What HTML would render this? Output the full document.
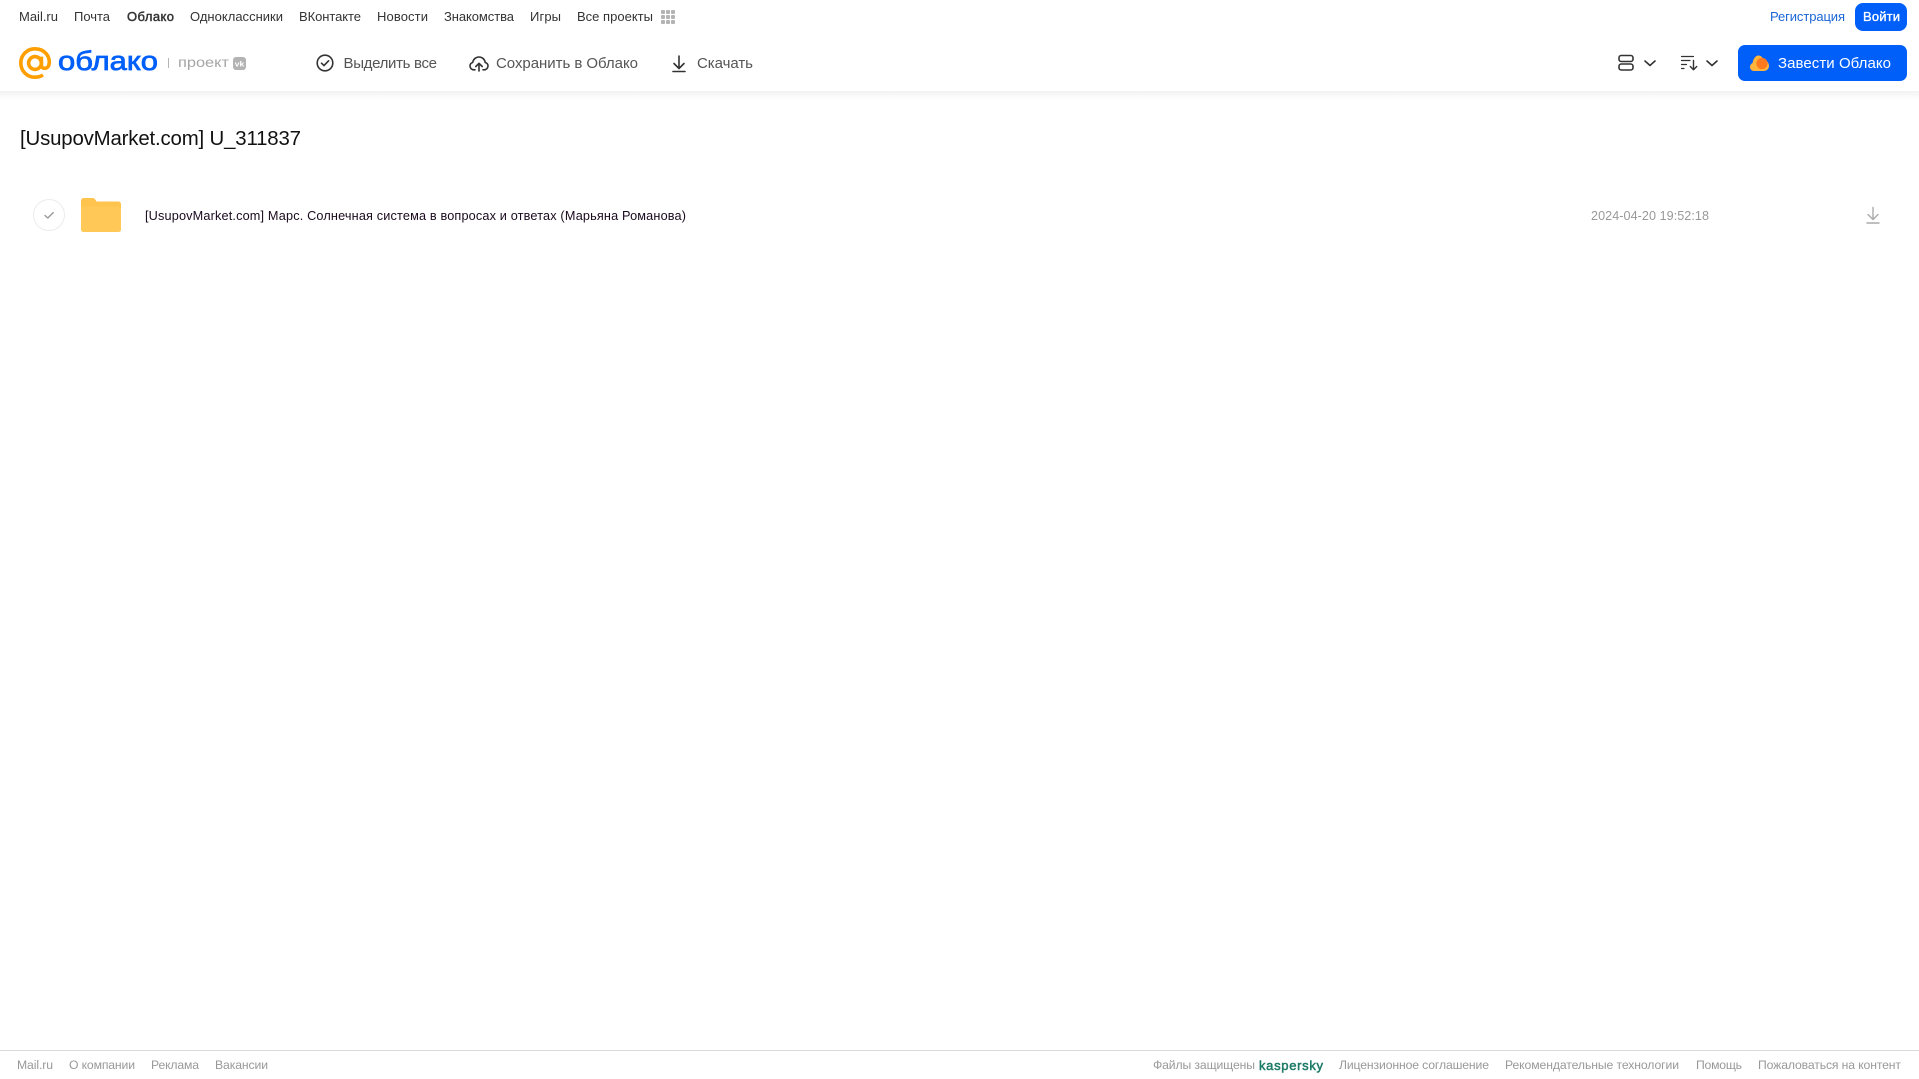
<!DOCTYPE html>
<html lang="ru">
<head>
<meta charset="utf-8">
<title>Облако</title>
<style>
html,body{margin:0;padding:0;background:#fff;width:1919px;height:1079px;overflow:hidden}
svg{display:block;position:absolute;left:0;top:0}
text{font-family:"Liberation Sans",Arial,sans-serif}
.n{font-size:13px;fill:#333}
.a{font-size:15px;fill:#555}
.f{font-size:12.2px;fill:#999}
</style>
</head>
<body>
<svg width="1919" height="1079" viewBox="0 0 1919 1079" xmlns="http://www.w3.org/2000/svg">
<defs>
<linearGradient id="sh" x1="0" y1="0" x2="0" y2="1">
<stop offset="0" stop-color="#f2f2f2"/><stop offset="1" stop-color="#ffffff"/>
</linearGradient>
</defs>
<rect width="1919" height="1079" fill="#fff"/>
<rect x="0" y="91" width="1919" height="9" fill="url(#sh)"/>

<!-- top nav -->
<text class="n" x="19" y="21" textLength="39" lengthAdjust="spacing">Mail.ru</text>
<text class="n" x="74" y="21" textLength="36" lengthAdjust="spacing">Почта</text>
<text class="n" x="127" y="21" textLength="47" lengthAdjust="spacing" stroke="#333" stroke-width=".45">Облако</text>
<text class="n" x="190" y="21" textLength="93" lengthAdjust="spacing">Одноклассники</text>
<text class="n" x="299" y="21" textLength="62" lengthAdjust="spacing">ВКонтакте</text>
<text class="n" x="377" y="21" textLength="51" lengthAdjust="spacing">Новости</text>
<text class="n" x="444" y="21" textLength="70" lengthAdjust="spacing">Знакомства</text>
<text class="n" x="530" y="21" textLength="31" lengthAdjust="spacing">Игры</text>
<text class="n" x="577" y="21" textLength="76" lengthAdjust="spacing">Все проекты</text>
<g fill="#b4b4b4">
<rect x="661" y="10" width="4" height="4" rx="1"/><rect x="666" y="10" width="4" height="4" rx="1"/><rect x="671" y="10" width="4" height="4" rx="1"/>
<rect x="661" y="15" width="4" height="4" rx="1"/><rect x="666" y="15" width="4" height="4" rx="1"/><rect x="671" y="15" width="4" height="4" rx="1"/>
<rect x="661" y="20" width="4" height="4" rx="1"/><rect x="666" y="20" width="4" height="4" rx="1"/><rect x="671" y="20" width="4" height="4" rx="1"/>
</g>

<!-- logo -->
<g fill="none" stroke="#ff9e00" stroke-width="3.6">
<circle cx="35" cy="63" r="6.4"/>
<path d="M41.4 56.6V65.5C41.4 69 47.6 69.5 48.9 65C50.8 57 45 48.8 35 48.8C26.8 48.8 20.8 55.2 20.8 63C20.8 71 27 77.2 35 77.2C38 77.2 40.6 76.5 43 75"/>
</g>
<text x="58" y="70" font-size="27" fill="#005ff9" stroke="#005ff9" stroke-width=".75" textLength="100" lengthAdjust="spacingAndGlyphs">облако</text>
<rect x="168" y="58" width="1" height="10" fill="#b5b5b5"/>
<text x="178" y="67" font-size="14" fill="#a6a6a6" textLength="51" lengthAdjust="spacingAndGlyphs">проект</text>
<rect x="233" y="57" width="13" height="13" rx="3" fill="#b3b3b3"/>
<text x="234.8" y="66.5" font-size="7.5" font-weight="700" fill="#fff" textLength="9.5" lengthAdjust="spacingAndGlyphs">vk</text>

<!-- actions -->
<g fill="none" stroke="#333" stroke-width="1.6" stroke-linecap="round" stroke-linejoin="round">
<circle cx="325" cy="63" r="7.8"/>
<path d="M321.5 63.2L324 65.6L328.6 60.8"/>
<path d="M475 69.8H474C471.6 69.8 470 68 470 66C470 64.3 471.1 62.9 472.7 62.5C473.2 59.5 475.6 57 479 57C482.4 57 484.8 59.5 485.2 62.5C486.9 62.9 488 64.3 488 66C488 68 486.4 69.8 484 69.8H483"/>
<path d="M479 71V63.5M475.8 66.5L479 63.3L482.2 66.5"/>
<path d="M679 56V68M674 63.5L679 68.5L684 63.5"/>
<path d="M673 71.5H685"/>
</g>
<text class="a" x="343.5" y="68" textLength="93.5" lengthAdjust="spacing">Выделить все</text>
<text class="a" x="496" y="68" textLength="142" lengthAdjust="spacing">Сохранить в Облако</text>
<text class="a" x="697" y="68" textLength="56" lengthAdjust="spacing">Скачать</text>

<!-- top right -->
<text class="n" x="1770" y="21" style="fill:#1a66d6" textLength="75" lengthAdjust="spacing">Регистрация</text>
<rect x="1855" y="3" width="52" height="28" rx="8" fill="#005ff9"/>
<text x="1863" y="21" font-size="13" fill="#fff" stroke="#fff" stroke-width=".35" textLength="37" lengthAdjust="spacing">Войти</text>

<g fill="none" stroke="#333" stroke-width="1.6" stroke-linecap="round" stroke-linejoin="round">
<rect x="1619" y="55.5" width="14" height="6" rx="2.2"/>
<rect x="1619" y="64" width="14" height="6" rx="2.2"/>
<path d="M1645 61L1650 65.5L1655 61"/>
<path d="M1707 61L1712 65.5L1717 61"/>
<path d="M1681.5 56.5H1693.5M1681.5 60.5H1690M1681.5 64.5H1686.5M1681.5 68.5H1684" stroke-width="1.2"/>
<path d="M1693.5 60.5V69.5M1690.3 66.5L1693.5 69.7L1696.7 66.5" stroke-width="1.4"/>
</g>

<rect x="1738" y="45" width="169" height="36" rx="7" fill="#005ff9"/>
<path d="M1754 71C1751.5 71 1750 69 1750 67C1750 65 1751.3 63.6 1752.6 63C1753 59.4 1755.4 55.5 1758.5 55.5C1761.5 55.5 1763 58.3 1763.6 60C1766.8 60 1769 63 1769 65.8C1769 68.8 1766.8 71 1764 71Z" fill="#ffb43c"/>
<circle cx="1762" cy="63.5" r="5.6" fill="#ff7a1f"/>
<text x="1778" y="68" font-size="15" fill="#fff" textLength="113" lengthAdjust="spacing">Завести Облако</text>

<!-- title -->
<text x="20" y="145" font-size="20.4" fill="#111" textLength="281" lengthAdjust="spacing">[UsupovMarket.com] U_311837</text>

<!-- row -->
<circle cx="49" cy="215" r="15.5" fill="#fff" stroke="#ececec" stroke-width="1"/>
<path d="M45 215.5L47.8 218L53.2 212.6" fill="none" stroke="#999" stroke-width="1.4" stroke-linecap="round" stroke-linejoin="round"/>
<path d="M81 201C81 199 82.2 198 84 198H92.5C94 198 94.8 198.8 95.6 200L96.5 201.5H118C120 201.5 121 202.5 121 204.5V208H81Z" fill="#ffc44d"/>
<path d="M81 206.5H118C120 206.5 121 207.5 121 209.5V229C121 231 120 232 118 232H84C82 232 81 231 81 229Z" fill="#ffc857"/>
<text x="145" y="220" font-size="12.7" fill="#1a0a1e" textLength="541" lengthAdjust="spacing">[UsupovMarket.com] Марс. Солнечная система в вопросах и ответах (Марьяна Романова)</text>
<text x="1591" y="220" font-size="12.6" fill="#999" textLength="118" lengthAdjust="spacing">2024-04-20 19:52:18</text>
<g fill="none" stroke="#aaa" stroke-width="1.4" stroke-linecap="round" stroke-linejoin="round">
<path d="M1873 207.5V219M1868 214.5L1873 219.5L1878 214.5"/>
<path d="M1867 223H1879"/>
</g>

<!-- footer -->
<rect x="0" y="1050" width="1919" height="1" fill="#d9d9d9"/>
<text class="f" x="17" y="1069" textLength="36" lengthAdjust="spacing">Mail.ru</text>
<text class="f" x="69" y="1069" textLength="66" lengthAdjust="spacing">О компании</text>
<text class="f" x="151" y="1069" textLength="48" lengthAdjust="spacing">Реклама</text>
<text class="f" x="215" y="1069" textLength="53" lengthAdjust="spacing">Вакансии</text>
<text class="f" x="1153" y="1069" textLength="102" lengthAdjust="spacing">Файлы защищены</text>
<text x="1259" y="1070" font-size="13" fill="#1c7a66" stroke="#1c7a66" stroke-width=".5" textLength="64" lengthAdjust="spacing">kaspersky</text>
<text class="f" x="1339" y="1069" textLength="150" lengthAdjust="spacing">Лицензионное соглашение</text>
<text class="f" x="1505" y="1069" textLength="174" lengthAdjust="spacing">Рекомендательные технологии</text>
<text class="f" x="1696" y="1069" textLength="46" lengthAdjust="spacing">Помощь</text>
<text class="f" x="1758" y="1069" textLength="143" lengthAdjust="spacing">Пожаловаться на контент</text>
</svg>
</body>
</html>
